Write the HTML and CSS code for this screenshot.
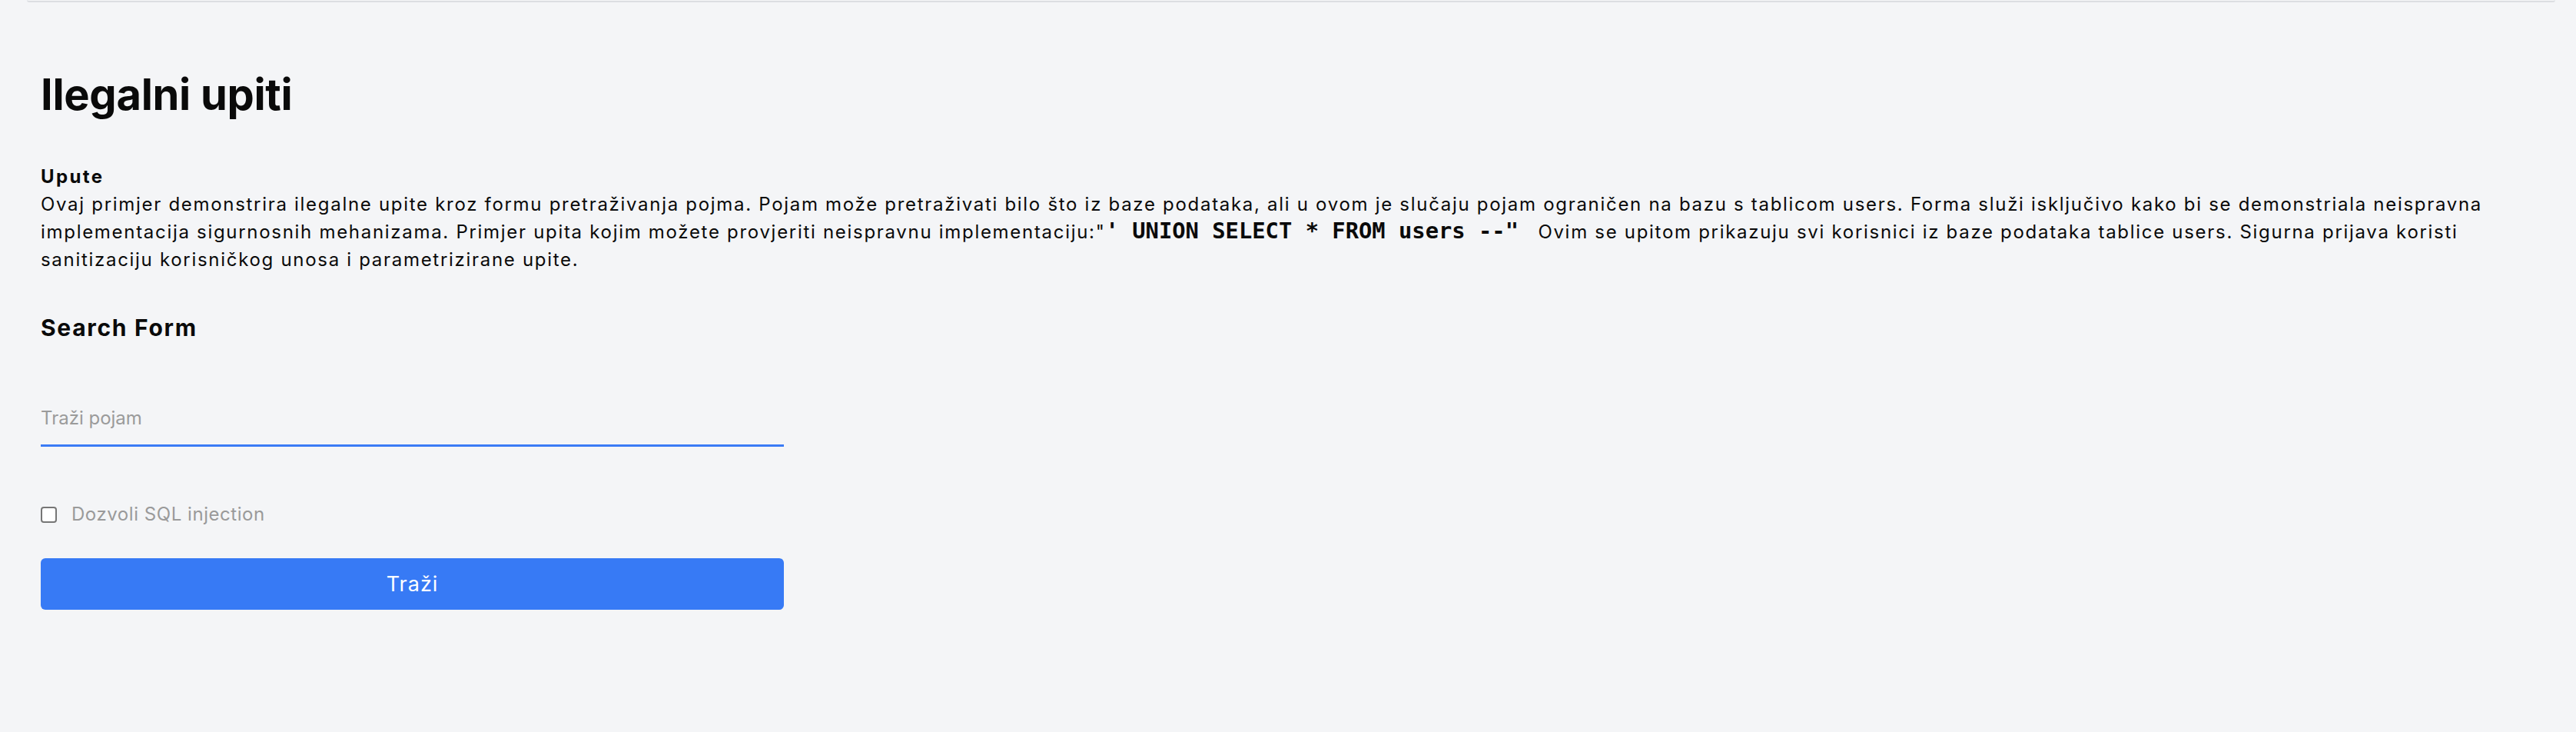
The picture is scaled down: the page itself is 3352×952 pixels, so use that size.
FILE: index.html
```html
<!DOCTYPE html>
<html lang="hr">
<head>
<meta charset="utf-8">
<title>Ilegalni upiti</title>
<link rel="stylesheet" href="styles.css">
</head>
<body>
<div class="topbar"></div>
<main class="page">
  <h1 class="title">Ilegalni upiti</h1>
  <section class="instructions">
    <div class="instructions-title">Upute</div>
    <p class="instructions-text">Ovaj primjer demonstrira ilegalne upite kroz formu pretraživanja pojma. Pojam može pretraživati bilo što iz baze podataka, ali u ovom je slučaju pojam ograničen na bazu s tablicom users. Forma služi isključivo kako bi se demonstriala neispravna implementacija sigurnosnih mehanizama. Primjer upita kojim možete provjeriti neispravnu implementaciju:"<code class="sql">' UNION SELECT * FROM users --" </code>Ovim se upitom prikazuju svi korisnici iz baze podataka tablice users. Sigurna prijava koristi sanitizaciju korisničkog unosa i parametrizirane upite.</p>
  </section>
  <h2 class="form-title">Search Form</h2>
  <form class="search-form" onsubmit="return false">
    <input class="search-input" type="text" placeholder="Traži pojam">
    <label class="check-row">
      <input class="check" type="checkbox">
      <span class="check-label">Dozvoli SQL injection</span>
    </label>
    <button class="submit" type="submit">Traži</button>
  </form>
</main>
</body>
</html>
```

FILE: styles.css
```css
* { box-sizing: border-box; }

html, body {
  margin: 0;
  padding: 0;
  background: #f4f5f7;
}

body {
  font-family: Inter, "Noto Sans", "Liberation Sans", sans-serif;
  color: #0a0a0a;
  width: 3352px;
  height: 952px;
  overflow: hidden;
}

.topbar {
  height: 3px;
  margin: 0 27px 0 35px;
  border-bottom: 2px solid #dcdee2;
  border-radius: 0 0 12px 12px;
}

.page {
  padding: 86px 53px 0 53px;
}

.title {
  margin: 0;
  font-size: 56px;
  line-height: 68px;
  font-weight: 700;
  letter-spacing: -0.3px;
}

.instructions {
  margin-top: 55px;
}

.instructions-title {
  font-size: 24px;
  line-height: 36px;
  font-weight: 700;
  letter-spacing: 2.4px;
}

.instructions-text {
  margin: 0;
  font-size: 24px;
  line-height: 36px;
  font-weight: 400;
  letter-spacing: 1.7px;
}

.sql {
  font-family: "DejaVu Sans Mono", "Liberation Mono", monospace;
  font-weight: 700;
  font-size: 28.8px;
  line-height: 24px;
  letter-spacing: 0;
  margin-right: 8px;
}

.form-title {
  margin: 49px 0 0 0;
  font-size: 30px;
  line-height: 42px;
  font-weight: 700;
  letter-spacing: 1.7px;
}

.search-form {
  width: 967px;
  display: flex;
  flex-direction: column;
}

.search-input {
  margin-top: 67px;
  width: 100%;
  padding: 12px 0 16px 0;
  font-family: inherit;
  font-size: 24px;
  line-height: 36px;
  color: #0a0a0a;
  background: transparent;
  border: none;
  border-bottom: 3px solid #3a7bf5;
  outline: none;
}

.search-input::placeholder {
  color: #9b9b9b;
}

.check-row {
  margin-top: 70px;
  display: flex;
  align-items: center;
  gap: 19px;
  height: 36px;
}

.check {
  appearance: none;
  -webkit-appearance: none;
  margin: 0;
  width: 21px;
  height: 21px;
  border: 2px solid #767676;
  border-radius: 4px;
  background: #ffffff;
}

.check:checked {
  background: #3a7bf5;
  border-color: #3a7bf5;
}

.check-label {
  font-size: 24px;
  line-height: 36px;
  color: #9a9a9a;
  letter-spacing: 0.55px;
}

.submit {
  margin-top: 39px;
  height: 67px;
  width: 100%;
  border: none;
  border-radius: 6px;
  background: #377af5;
  color: #ffffff;
  font-family: inherit;
  font-size: 27px;
  line-height: 36px;
  font-weight: 400;
  letter-spacing: 1px;
  display: flex;
  align-items: center;
  justify-content: center;
  cursor: pointer;
}
```
